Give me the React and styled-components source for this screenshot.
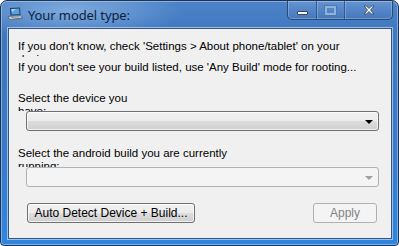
import styled, { createGlobalStyle } from "styled-components";

const GlobalStyle = createGlobalStyle`
  html, body {
    margin: 0;
    padding: 0;
    background: #ffffff;
  }
`;

const Window = styled.div`
  box-sizing: border-box;
  width: 399px;
  height: 246px;
  display: flex;
  flex-direction: column;
  border: 1px solid #1f3450;
  border-radius: 7px 7px 4px 4px;
  background:
    radial-gradient(ellipse 160px 40px at 70px 10px, rgba(170, 205, 240, 0.55), rgba(170, 205, 240, 0) 70%),
    linear-gradient(180deg, #4c83c8 0%, #3f77c0 14%, #3b79c8 60%, #2f86df 100%);
  box-shadow: inset 0 0 0 1px rgba(190, 220, 250, 0.5);
  overflow: hidden;
`;

const TitleBar = styled.div`
  height: 27px;
  display: flex;
  align-items: flex-start;
  padding: 0 5px 0 6px;
  font-family: "Noto Sans", "Open Sans", sans-serif;
`;

const AppIcon = styled.svg`
  margin-top: 5px;
  width: 16px;
  height: 16px;
  flex: none;
`;

const Title = styled.div`
  margin: 5px 0 0 5px;
  font-size: 13px;
  letter-spacing: -0.1px;
  line-height: 18px;
  color: #0f1f38;
`;

const CaptionGroup = styled.div`
  margin-left: auto;
  display: flex;
  height: 18px;
  border: 1px solid #2b4a70;
  border-top: none;
  border-radius: 0 0 5px 5px;
  box-shadow: inset 0 0 0 1px rgba(190, 215, 245, 0.35);
  background: linear-gradient(180deg, rgba(120, 160, 215, 0.55), rgba(70, 115, 185, 0.55));
  overflow: hidden;
`;

const CaptionButton = styled.div`
  width: ${(p) => p.$w}px;
  display: flex;
  align-items: center;
  justify-content: center;
  & + & {
    border-left: 1px solid rgba(40, 70, 110, 0.7);
    box-shadow: inset 1px 0 0 rgba(190, 215, 245, 0.35);
  }
`;

const MinGlyph = styled.div`
  width: 9px;
  height: 2px;
  margin-top: 5px;
  background: #ffffff;
  border: 1px solid #32455e;
  border-radius: 1px;
`;

const MaxGlyph = styled.div`
  width: 7px;
  height: 5px;
  border: 2px solid #8eb2dc;
  outline: 1px solid #4e78ab;
`;

const Client = styled.div`
  flex: 1;
  margin: 0 6px 6px 7px;
  background: #f0f0f0;
  border: 1px solid #35557d;
  box-shadow: 0 0 0 1px rgba(220, 235, 250, 0.6);
  padding: 11px 14px 0 9px;
  display: flex;
  flex-direction: column;
  font-family: "Liberation Sans", Arial, sans-serif;
  font-size: 11.5px;
  color: #000000;
`;

const Label = styled.div`
  height: ${(p) => p.$h}px;
  line-height: 13px;
  overflow: hidden;
  margin-top: ${(p) => p.$mt || 0}px;
  width: ${(p) => p.$w || 350}px;
`;

const Combo = styled.div`
  box-sizing: border-box;
  margin: 0 0 0 8px;
  height: 20px;
  width: 353px;
  border: 1px solid ${(p) => (p.$disabled ? "#adb2b5" : "#707070")};
  border-radius: 3px;
  background: ${(p) =>
    p.$disabled
      ? "#f4f4f4"
      : "linear-gradient(180deg, #f2f2f2 0%, #ebebeb 50%, #dddddd 51%, #cfcfcf 100%)"};
  box-shadow: inset 0 0 0 1px ${(p) => (p.$disabled ? "transparent" : "rgba(255,255,255,0.7)")};
  display: flex;
  align-items: center;
  justify-content: flex-end;
  padding-right: 5px;
`;

const Arrow = styled.div`
  width: 0;
  height: 0;
  border-left: 4px solid transparent;
  border-right: 4px solid transparent;
  border-top: 4px solid ${(p) => (p.$disabled ? "#a0a0a0" : "#000000")};
  margin-top: 1px;
`;

const ButtonRow = styled.div`
  display: flex;
  justify-content: space-between;
  margin: 16px 0 0 9px;
`;

const Button = styled.div`
  box-sizing: border-box;
  width: ${(p) => p.$w}px;
  height: 20px;
  border: 1px solid ${(p) => (p.$disabled ? "#adb2b5" : "#707070")};
  border-radius: 3px;
  background: ${(p) =>
    p.$disabled
      ? "#f4f4f4"
      : "linear-gradient(180deg, #f2f2f2 0%, #ebebeb 50%, #dddddd 51%, #cfcfcf 100%)"};
  box-shadow: inset 0 0 0 1px ${(p) => (p.$disabled ? "transparent" : "rgba(255,255,255,0.7)")};
  color: ${(p) => (p.$disabled ? "#838383" : "#000000")};
  display: flex;
  align-items: center;
  justify-content: center;
  font-size: 12px;
`;

function App() {
  return (
    <>
      <GlobalStyle />
      <Window>
        <TitleBar>
          <AppIcon viewBox="0 0 16 16">
            <path d="M3 2 L13 1.5 L13.5 9 L3.5 9.5 Z" fill="#2a3d55" />
            <path d="M4.2 3 L12.2 2.6 L12.5 8.2 L4.5 8.5 Z" fill="#4fa4e8" />
            <path d="M4.4 3.2 L9 3 L5 6 Z" fill="#a9dcff" />
            <path d="M1 10.5 L13.5 9.5 L15.5 12 L3 13.5 Z" fill="#cfd6de" stroke="#4a5563" strokeWidth="0.7" />
            <path d="M3 13.5 L15.5 12 L15.5 13 L3 14.5 Z" fill="#6c7886" />
            <path d="M4 11 L12 10.3 L13 11.3 L5 12.1 Z" fill="#8d99a6" />
          </AppIcon>
          <Title>Your model type:</Title>
          <CaptionGroup>
            <CaptionButton $w={28}>
              <MinGlyph />
            </CaptionButton>
            <CaptionButton $w={27}>
              <MaxGlyph />
            </CaptionButton>
            <CaptionButton $w={47}>
              <svg width="12" height="10" viewBox="0 0 12 10">
                <path
                  d="M1 1 L3.5 1 L6 3.5 L8.5 1 L11 1 L7.5 5 L11 9 L8.5 9 L6 6.5 L3.5 9 L1 9 L4.5 5 Z"
                  fill="#ffffff"
                  stroke="#3a4a60"
                  strokeWidth="0.9"
                  strokeLinejoin="round"
                />
              </svg>
            </CaptionButton>
          </CaptionGroup>
        </TitleBar>
        <Client>
          <Label $h={17}>If you don't know, check 'Settings &gt; About phone/tablet' on your device</Label>
          <Label $h={13} $mt={4} $w={370}>
            If you don't see your build listed, use 'Any Build' mode for rooting...
          </Label>
          <Label $h={19} $mt={18} $w={135}>Select the device you have:</Label>
          <Combo>
            <Arrow />
          </Combo>
          <Label $h={20} $mt={16} $w={235}>Select the android build you are currently running:</Label>
          <Combo $disabled>
            <Arrow $disabled />
          </Combo>
          <ButtonRow>
            <Button $w={168}>Auto Detect Device + Build...</Button>
            <Button $w={64} $disabled>Apply</Button>
          </ButtonRow>
        </Client>
      </Window>
    </>
  );
}

export default App;
